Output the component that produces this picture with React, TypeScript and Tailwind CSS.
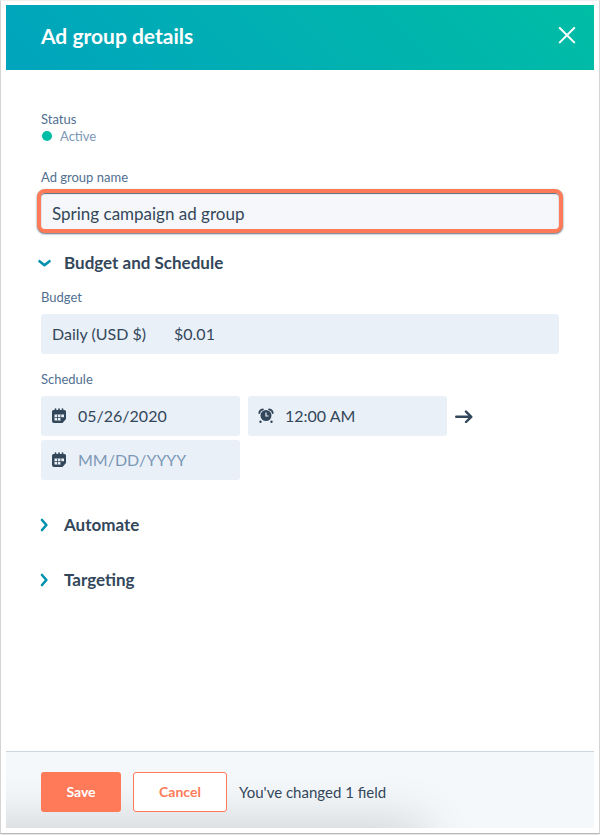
import React, { useState } from 'react';

const CalendarIcon: React.FC = () => (
  <svg viewBox="0 0 16 16" className="h-4 w-4 shrink-0" aria-hidden="true">
    <path
      d="M2.500 2h11A1.500 1.500 0 0 1 15 3.500V11l-3.500 4H3a2 2 0 0 1-2-2V3.500A1.500 1.500 0 0 1 2.500 2z"
      fill="#33475b"
    />
    <path d="M4.500 1v3M8 1v3M11.500 1v3" stroke="#33475b" strokeWidth="1.700" strokeLinecap="round" />
    <path d="M3.500 6.500h9.500v3.500h-3v2.500H3.500z" fill="#eaf0f8" />
    <path d="M3.500 9.500H13M6.500 6.500v6M9.800 6.500v6" stroke="#33475b" strokeWidth="0.800" />
  </svg>
);

const AlarmIcon: React.FC = () => (
  <svg viewBox="0 0 16 16" className="h-4 w-4 shrink-0" aria-hidden="true">
    <circle cx="8" cy="7.500" r="5.500" fill="#33475b" />
    <path d="M1.300 5C1.400 3 2.800 1.600 4.900 1.300M14.700 5c-.1-2-1.500-3.400-3.600-3.700" fill="none" stroke="#33475b" strokeWidth="1.800" strokeLinecap="round" />
    <path d="M8 4.500V8h2.600" fill="none" stroke="#eaf0f8" strokeWidth="1.200" />
    <circle cx="2.500" cy="13.800" r="1.200" fill="#33475b" />
    <circle cx="13.500" cy="13.800" r="1.200" fill="#33475b" />
  </svg>
);

const ArrowIcon: React.FC = () => (
  <svg viewBox="0 0 18 14" className="h-[14px] w-[18px] shrink-0" aria-hidden="true">
    <path d="M1.200 7.800h15M11 2.600l5.300 5.200-5.300 5.200" fill="none" stroke="#33475b" strokeWidth="2.400" strokeLinecap="round" strokeLinejoin="round" />
  </svg>
);

const Chevron: React.FC<{ open?: boolean }> = ({ open }) => (
  <svg viewBox="0 0 14 14" className="h-[14px] w-[14px] shrink-0" aria-hidden="true">
    <path
      d={open ? 'M2.500 5.200l5 4 5-4' : 'M5 2l4.400 5L5 12'}
      fill="none"
      stroke="#0091ae"
      strokeWidth="2.600"
      strokeLinecap="round"
      strokeLinejoin="round"
    />
  </svg>
);

const SectionToggle: React.FC<{ title: string; open?: boolean }> = ({ title, open }) => (
  <button type="button" aria-expanded={!!open} className="-ml-1 flex h-6 items-center gap-[13px] text-[17px] font-bold">
    <Chevron open={open} />
    {title}
  </button>
);

interface FieldProps {
  id: string;
  label: string;
  icon: React.ReactNode;
  value?: string;
  placeholder?: string;
}

const PickerField: React.FC<FieldProps> = ({ id, label, icon, value, placeholder }) => (
  <div className="flex h-10 max-w-[199px] min-w-0 flex-1 items-center gap-[11px] rounded-[3px] bg-[#eaf0f8] px-[10px]">
    {icon}
    <input
      id={id}
      aria-label={label}
      defaultValue={value}
      placeholder={placeholder}
      className="w-full min-w-0 bg-transparent text-base outline-none placeholder:text-[#7c98b6]"
    />
  </div>
);

export default function App() {
  const [name, setName] = useState('Spring campaign ad group');

  return (
    <div className="flex min-h-screen flex-col bg-white pb-px font-['Lato','Open_Sans',sans-serif] text-[#33475b]">
      <div className="flex flex-1 flex-col border border-[#d4d4d4] border-t-[#f0f0f0] border-b-[#b8b8b8] px-[5px] pt-1 pb-[5px] shadow-sm">
        {/* Header */}
        <header className="flex h-[65px] items-center justify-between bg-[linear-gradient(45deg,#00a4bd,#00bda5)] pr-[18px] pb-1 pl-[35px] text-white">
          <h1 className="text-[21px] font-bold">Ad group details</h1>
          <button type="button" aria-label="Close">
            <svg viewBox="0 0 18 18" className="h-[18px] w-[18px]" aria-hidden="true">
              <path d="M1.800 1l14.400 14.400M16.200 1 1.800 15.400" stroke="#fff" strokeWidth="2" strokeLinecap="round" />
            </svg>
          </button>
        </header>

        {/* Form */}
        <main className="flex flex-1 flex-col items-stretch px-[35px] pt-10 pb-10">
          <div className="text-[13px] leading-[18px] text-[#516f90]">Status</div>
          <div className="flex items-center gap-2 text-[13px] leading-4 text-[#7c98b6]">
            <span className="ml-px h-[10px] w-[10px] rounded-full bg-[#00bda5]" />
            Active
          </div>

          <label htmlFor="group-name" className="mt-6 text-[13px] leading-[18px] text-[#516f90]">
            Ad group name
          </label>
          <div className="-mx-1 mt-[3px] rounded-lg border-4 border-[#ff7a59] bg-[#f5f7fa] shadow-[0_1px_2px_#33475bcc,inset_0_1px_1px_#33475bcc]">
            <input
              id="group-name"
              value={name}
              onChange={(e) => setName(e.target.value)}
              className="block h-9 w-full bg-transparent px-[11px] pt-1 text-[17px] outline-none"
            />
          </div>

          <div className="mt-[18px]">
            <SectionToggle title="Budget and Schedule" open />
          </div>

          <label htmlFor="budget" className="mt-[13px] text-[13px] leading-[18px] text-[#516f90]">
            Budget
          </label>
          <div className="mt-2 flex h-10 items-center gap-7 rounded-[3px] bg-[#eaf0f8] px-[11px] text-base">
            <span className="shrink-0">Daily (USD $)</span>
            <input id="budget" defaultValue="$0.01" className="w-full min-w-0 bg-transparent outline-none" />
          </div>

          <label htmlFor="start-date" className="mt-4 text-[13px] leading-[18px] text-[#516f90]">
            Schedule
          </label>
          <div className="mt-2 flex items-center gap-2">
            <PickerField id="start-date" label="Start date" icon={<CalendarIcon />} value="05/26/2020" />
            <PickerField id="start-time" label="Start time" icon={<AlarmIcon />} value="12:00 AM" />
            <ArrowIcon />
          </div>
          <div className="mt-1 flex">
            <PickerField id="end-date" label="End date" icon={<CalendarIcon />} placeholder="MM/DD/YYYY" />
          </div>

          <div className="mt-[33px] flex flex-col gap-[31px]">
            <SectionToggle title="Automate" />
            <SectionToggle title="Targeting" />
          </div>
        </main>

        {/* Footer */}
        <footer className="relative overflow-hidden border-t border-[#cbd6e2] bg-[#f5f8fa] px-[35px] pt-5 pb-4">
          <div className="absolute top-full -left-20 h-10 w-[calc(73%+64px)] shadow-[0_0_50px_6px_#00000028]" />
          <div className="relative flex items-center gap-3 text-[15px]">
            <button type="button" className="h-10 w-20 rounded-[3px] bg-[#ff7a59] text-sm font-bold text-white">
              Save
            </button>
            <button type="button" className="h-10 w-[94px] rounded-[3px] border border-[#ff7a59] bg-white text-sm font-bold text-[#ff7a59]">
              Cancel
            </button>
            <span className="leading-5">You've changed 1 field</span>
          </div>
        </footer>
      </div>
    </div>
  );
}
